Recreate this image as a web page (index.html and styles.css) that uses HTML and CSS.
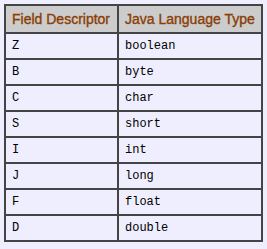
FILE: index.html
```html
<!DOCTYPE html>
<html>
<head>
<meta charset="utf-8">
<link rel="stylesheet" href="styles.css">
</head>
<body>
<table class="desc">
  <thead>
    <tr><th class="c1">Field Descriptor</th><th class="c2">Java Language Type</th></tr>
  </thead>
  <tbody>
    <tr><td>Z</td><td>boolean</td></tr>
    <tr><td>B</td><td>byte</td></tr>
    <tr><td>C</td><td>char</td></tr>
    <tr><td>S</td><td>short</td></tr>
    <tr><td>I</td><td>int</td></tr>
    <tr><td>J</td><td>long</td></tr>
    <tr><td>F</td><td>float</td></tr>
    <tr><td>D</td><td>double</td></tr>
  </tbody>
</table>
</body>
</html>
```
FILE: styles.css
```css
html, body {
  margin: 0;
  padding: 0;
  background: #eeeeff;
}
body {
  padding: 4px 0 0 4px;
}
.desc {
  border-collapse: collapse;
  width: 259px;
  border: 2px solid #555;
  table-layout: fixed;
}
.desc th, .desc td {
  border: 2px solid #444;
  text-align: left;
  padding: 0 6px;
  white-space: nowrap;
}
.desc th {
  background: #cccccc;
  color: #8a3d05;
  font-family: "Liberation Sans", Arial, sans-serif;
  font-weight: normal;
  -webkit-text-stroke: 0.35px #8a3d05;
  font-size: 14px;
  height: 26px;
}
.desc th.c1 { width: 99px; }
.desc td {
  font-family: "Liberation Mono", monospace;
  font-size: 12px;
  height: 24px;
  color: #000;
}
```
